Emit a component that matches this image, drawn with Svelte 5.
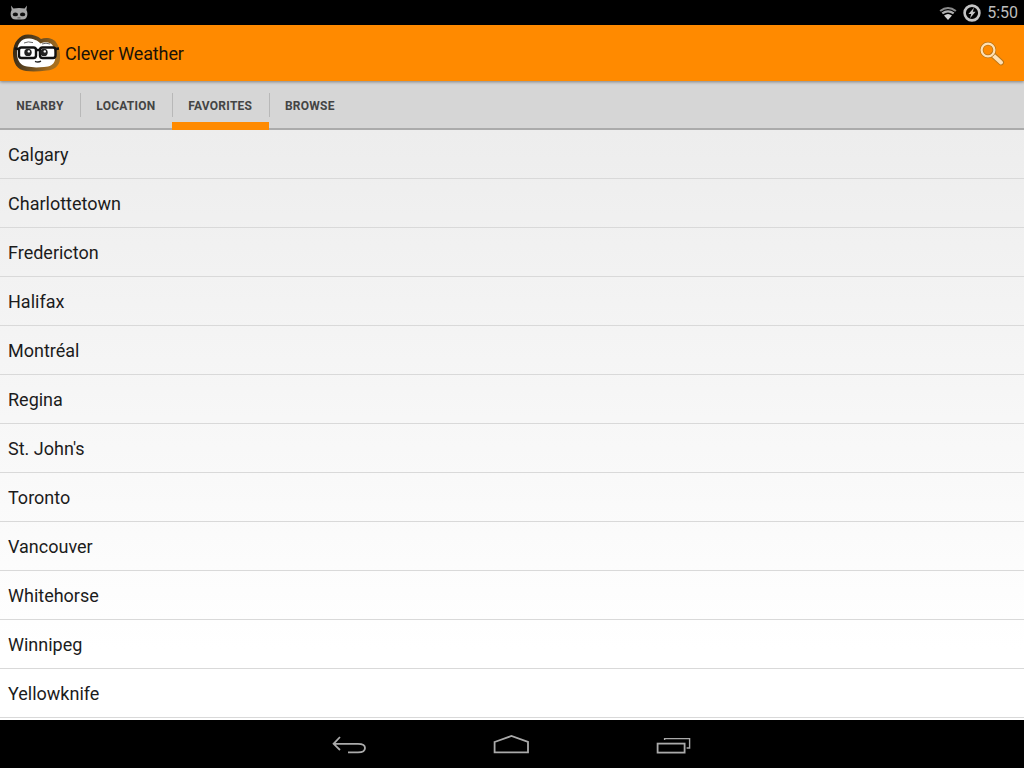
<script lang="ts">
	const cities = [
		'Calgary',
		'Charlottetown',
		'Fredericton',
		'Halifax',
		'Montréal',
		'Regina',
		"St. John's",
		'Toronto',
		'Vancouver',
		'Whitehorse',
		'Winnipeg',
		'Yellowknife'
	];
	const tabs = ['Nearby', 'Location', 'Favorites', 'Browse'];
	const selected = 2;
</script>

<div class="screen">
	<header class="status">
		<svg class="cm" width="18" height="16" viewBox="0 0 18 16">
			<path d="M1 0.5 L3.4 3.6 Q9 2.6 14.6 3.6 L17 0.5 L16.4 5 Q17.4 6.5 17.4 9 Q17.4 14.6 12 14.6 L6 14.6 Q0.6 14.6 0.6 9 Q0.6 6.5 1.6 5 Z" fill="#a8a8a8" />
			<ellipse cx="5.4" cy="9.4" rx="2.6" ry="1.9" fill="#111" />
			<ellipse cx="12.6" cy="9.4" rx="2.6" ry="1.9" fill="#111" />
			<rect x="7.5" y="12.4" width="3" height="1" fill="#555" />
		</svg>
		<span class="spacer"></span>
		<svg class="wifi" width="18" height="14" viewBox="0 0 18 14">
			<path d="M0.5 4.2 Q9 -2.4 17.5 4.2 L16.2 5.7 Q9 0.2 1.8 5.7 Z" fill="#8a8a8a" />
			<path d="M2.6 6.6 Q9 1.8 15.4 6.6 L14 8.2 Q9 4.6 4 8.2 Z" fill="#b0b0b0" />
			<path d="M5 9.4 Q9 6.4 13 9.4 L9 14 Z" fill="#d4d4d4" />
		</svg>
		<svg class="battery" width="18" height="18" viewBox="0 0 18 18">
			<circle cx="9" cy="9" r="7.4" fill="none" stroke="#c4c4c4" stroke-width="2.6" />
			<path d="M11 3.8 L5.4 10 L8.2 10 L7 14.2 L12.6 7.8 L9.8 7.8 Z" fill="#c4c4c4" />
		</svg>
		<span class="time">5:50</span>
	</header>

	<div class="actionbar">
		<svg class="logo" width="48" height="38" viewBox="0 0 48 38">
			<defs>
				<linearGradient id="rim" x1="0" y1="0" x2="1" y2="0.3">
					<stop offset="0" stop-color="#2a2114" />
					<stop offset="0.5" stop-color="#5e4520" />
					<stop offset="1" stop-color="#a87020" />
				</linearGradient>
			</defs>
			<path d="M15 0.5 C20 0.5 25 2 28 5 C33 3 41 4 43.5 9 C46.5 13 47.5 20 47 25 C46.5 32 41 36 34 36.5 C26 37.5 19 37.8 13 37 C4 36 0 29 0 19 C0 8 7 0.5 15 0.5 Z" fill="url(#rim)" />
			<path d="M15 4.5 C20 4.5 25 6.5 27.5 9.5 C32 7.5 38 8 40 12 C42 16 43 22 42 26 C40.5 31 37 32.6 31 33 C25 33.6 19 33.6 14 32.6 C8 31.6 4 27 4 19 C4 10 8 4.5 15 4.5 Z" fill="#fff" />
			<path d="M11 9 Q15 7 20 8.6 M29 10 Q33 8.4 37 10" stroke="#666" stroke-width="1" fill="none" />
			<g fill="none" stroke="#111" stroke-width="2.4">
				<rect x="6" y="13.5" width="17" height="10.5" rx="2.5" />
				<rect x="27" y="13.5" width="15.5" height="10.5" rx="2.5" />
				<path d="M23 16 L27 16 M1.5 14.5 L6 15 M42.5 15 L46 14.5" />
			</g>
			<circle cx="15" cy="18.4" r="3.7" fill="#222" />
			<circle cx="31" cy="18.4" r="3.7" fill="#222" />
			<circle cx="15.8" cy="17.4" r="1.2" fill="#fff" />
			<circle cx="31.8" cy="17.4" r="1.2" fill="#fff" />
			<path d="M22 27.4 Q25 28.8 28 27.2" stroke="#222" stroke-width="1.4" fill="none" />
		</svg>
		<span class="title">Clever Weather</span>
		<span class="spacer"></span>
		<svg class="search" width="26" height="26" viewBox="0 0 26 26">
			<path d="M14 15 L22 22.4" stroke="#b87418" stroke-width="6" stroke-linecap="round" />
			<path d="M15 16 L22 22.4" stroke="#ffe0b4" stroke-width="4" stroke-linecap="round" />
			<circle cx="9" cy="10" r="6.4" fill="none" stroke="#b87418" stroke-width="3.6" />
			<circle cx="9" cy="10" r="6.4" fill="none" stroke="#ffe0b4" stroke-width="2.2" />
		</svg>
	</div>

	<nav class="tabs">
		{#each tabs as tab, i}
			<div class="tab" class:selected={i === selected} class:divided={i > 0}>
				<span>{tab}</span>
			</div>
		{/each}
	</nav>

	<ul class="list">
		{#each cities as city}
			<li>{city}</li>
		{/each}
	</ul>

	<footer class="navbar">
		<svg width="36" height="20" viewBox="0 0 36 20">
			<path d="M8 3 L1.6 9.8 L8 16 M1.6 9.8 L26 9.8 Q33 9.8 33 14 Q33 18.4 26 18.4 L16 18.4" fill="none" stroke="#aaa" stroke-width="1.8" />
		</svg>
		<svg width="38" height="20" viewBox="0 0 38 20">
			<path d="M1.6 8 L18.4 2 L35 8 L35 18.4 L1.6 18.4 Z" fill="none" stroke="#aaa" stroke-width="1.8" />
		</svg>
		<svg width="36" height="20" viewBox="0 0 36 20">
			<path d="M8.6 6 L8.6 4.6 L33.6 4.6 L33.6 14 L30.6 14" fill="none" stroke="#aaa" stroke-width="1.4" />
			<rect x="1.6" y="9.6" width="27" height="9" fill="none" stroke="#aaa" stroke-width="1.8" />
		</svg>
	</footer>
</div>

<style>
	:global(body) {
		margin: 0;
		background: #000;
	}

	.screen {
		width: 1024px;
		height: 768px;
		display: flex;
		flex-direction: column;
		overflow: hidden;
		font-family: Roboto, 'Liberation Sans', sans-serif;
	}

	.status {
		height: 25px;
		background: #000;
		display: flex;
		align-items: center;
		padding: 0 6px 0 10px;
		gap: 6px;
	}

	.spacer {
		flex: 1;
	}

	.time {
		color: #bdbdbd;
		font-size: 16px;
	}

	.actionbar {
		height: 56px;
		background: #ff8a00;
		display: flex;
		align-items: center;
		padding: 0 19px 0 13px;
		position: relative;
		z-index: 1;
		box-shadow: 0 1px 3px rgba(0, 0, 0, 0.4);
	}

	.title {
		margin-left: 4px;
		font-size: 18px;
		letter-spacing: -0.14px;
		color: #1a1208;
	}

	.tabs {
		height: 49px;
		box-sizing: border-box;
		background: #d6d6d6;
		border-bottom: 2px solid #ababab;
		display: flex;
	}

	.tab {
		position: relative;
		height: 49px;
		box-sizing: border-box;
		display: flex;
		align-items: center;
		padding: 1px 16.35px 0;
		font-size: 12px;
		font-weight: 700;
		letter-spacing: 0.25px;
		text-transform: uppercase;
		color: #444;
	}

	.tab.divided::before {
		content: '';
		position: absolute;
		left: 0;
		top: 12px;
		height: 24px;
		width: 1px;
		background: #b8b8b8;
	}

	.tab.selected::after {
		content: '';
		position: absolute;
		left: 0;
		right: 0;
		bottom: 0;
		height: 8px;
		background: #ff8a00;
	}

	.list {
		list-style: none;
		margin: 0;
		padding: 0;
		height: 590px;
		background: linear-gradient(#ededed, #ffffff 88%);
	}

	.list li {
		height: 49px;
		box-sizing: border-box;
		border-bottom: 1px solid #d9d9d9;
		padding: 1px 8px 0;
		display: flex;
		align-items: center;
		font-size: 18px;
		color: #1c1c1c;
	}

	.navbar {
		height: 48px;
		background: #000;
		display: flex;
		align-items: center;
		justify-content: center;
		gap: 125px;
	}
</style>
